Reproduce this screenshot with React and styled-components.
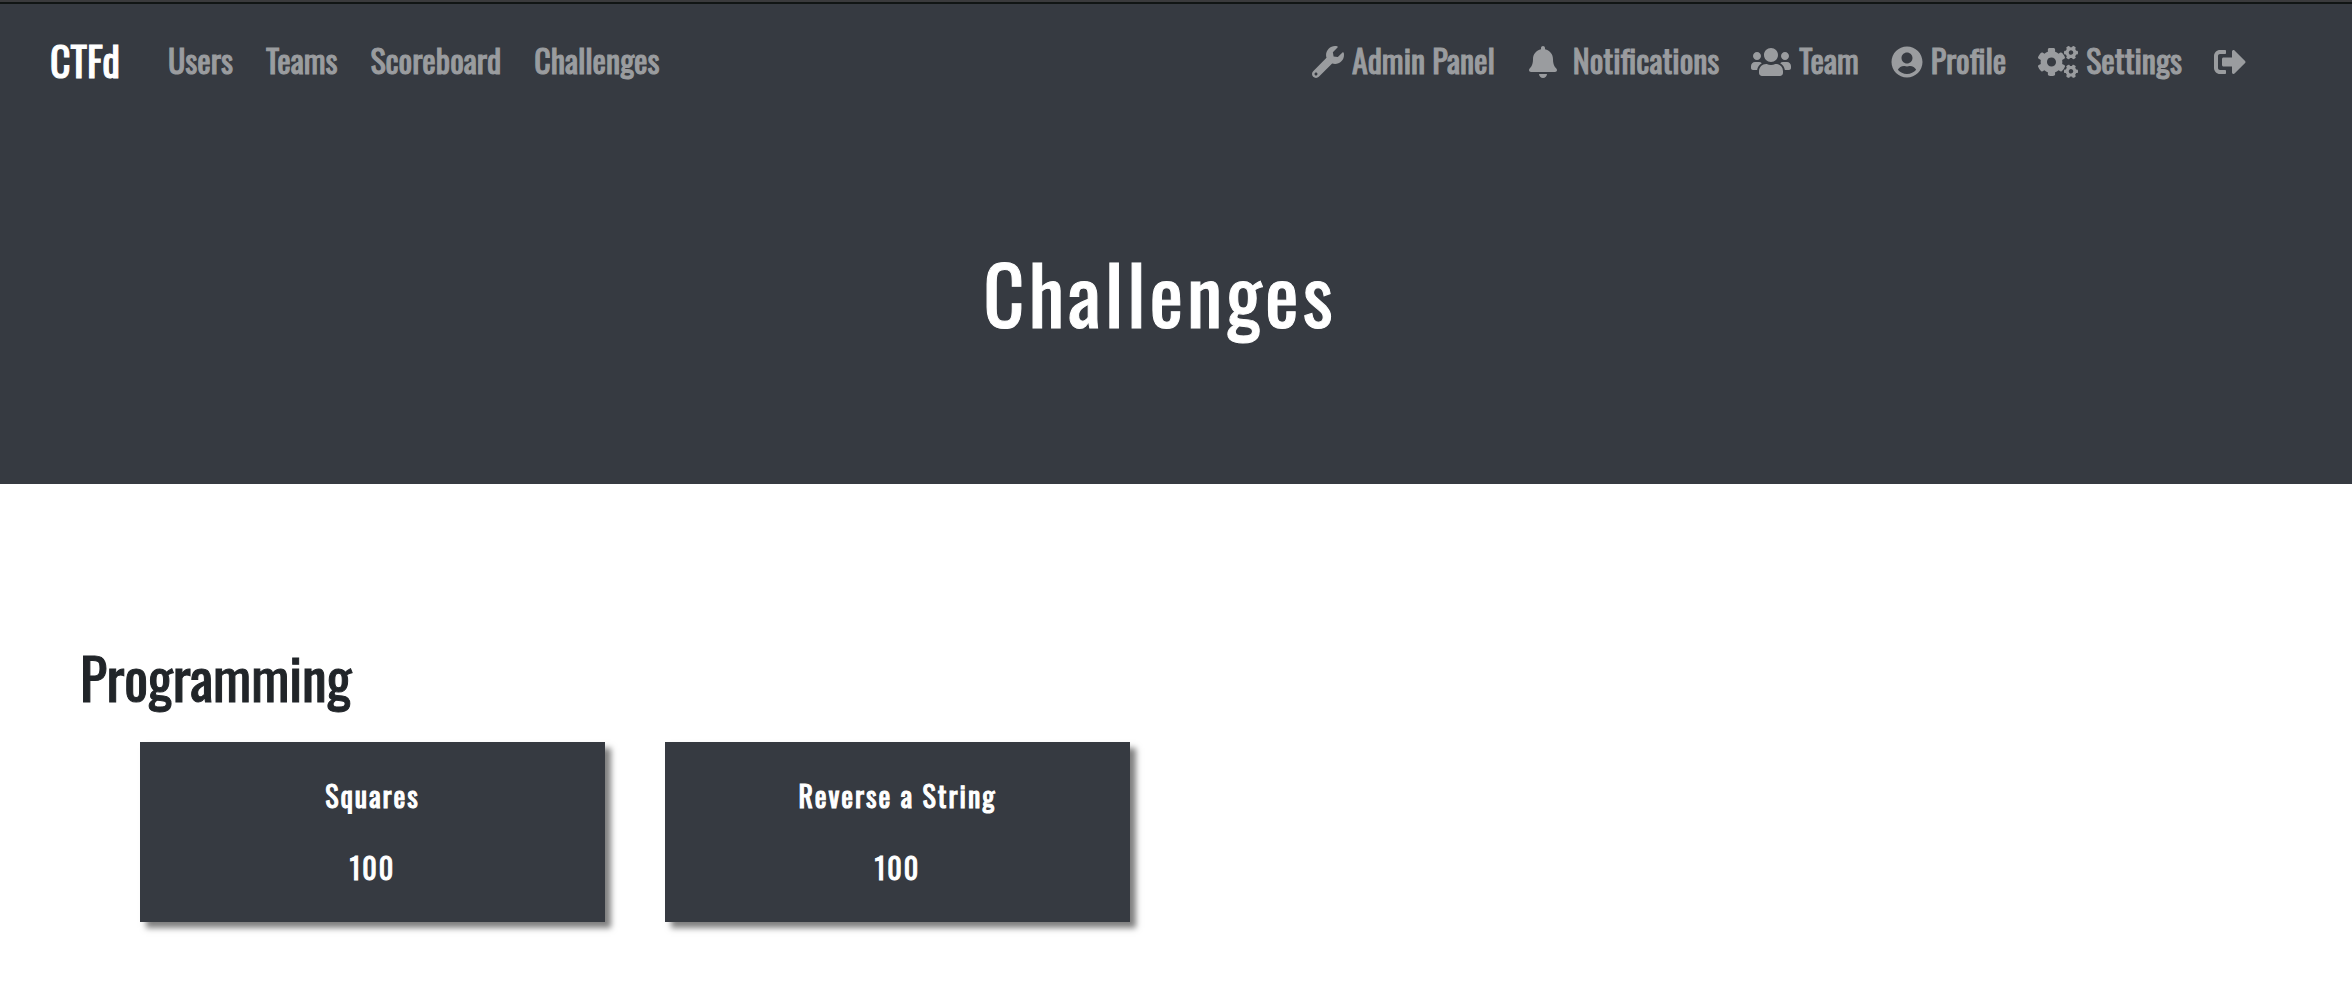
import React from "react";
import styled, { createGlobalStyle } from "styled-components";
import { FaWrench, FaBell, FaUsers, FaUserCircle, FaCogs, FaSignOutAlt } from "react-icons/fa";

const GlobalStyle = createGlobalStyle`
  *, *::before, *::after { box-sizing: border-box; }
  body {
    margin: 0;
    background: #fff;
    color: #212529;
    font-family: Oswald, "Liberation Sans Narrow", "Liberation Sans", sans-serif;
    font-size: 32px;
    font-weight: 400;
    line-height: 48px;
    -webkit-text-stroke: 1px currentColor;
  }
`;

const Header = styled.header`
  background: #363a41;
  color: #fff;
  border-top: 2px solid #3a3a3c;
`;

const Navbar = styled.nav`
  display: flex;
  align-items: center;
  padding: 24px 90px 24px 50px;
  border-top: 2px solid #111514;
`;

const Brand = styled.a`
  margin-right: 48px;
  font-size: 40px;
  line-height: 64px;
  color: #fff;
  text-decoration: none;
`;

const NavList = styled.ul`
  display: flex;
  gap: ${({ $end }) => ($end ? 32 : 33)}px;
  margin: 0;
  padding: 0;
  list-style: none;
  ${({ $end }) => $end && "margin-left: auto; padding-right: 16px;"}
`;

const NavLink = styled.a`
  display: flex;
  align-items: center;
  gap: ${({ $spaced }) => ($spaced ? 14 : 8)}px;
  height: 64px;
  color: #9a9c9f;
  text-decoration: none;
  white-space: nowrap;

  svg {
    flex: none;
    width: ${({ $wide }) => ($wide ? 40 : 32)}px;
    height: 32px;
    margin-top: 4px;
  }
`;

const Jumbotron = styled.div`
  padding: 124px 32px 140px 0;
  text-align: center;
`;

const Title = styled.h1`
  margin: 0;
  font-size: 80px;
  line-height: 104px;
  font-weight: inherit;
  letter-spacing: 4px;
`;

const Main = styled.main`
  padding: 160px 152px 60px 80px;
`;

const CategoryTitle = styled.h2`
  margin: 0 0 32px;
  font-size: 56px;
  line-height: 66px;
  font-weight: inherit;
`;

const Grid = styled.div`
  display: grid;
  grid-template-columns: repeat(4, minmax(0, 1fr));
  gap: 60px;
  padding: 0 20px 0 60px;
`;

const Card = styled.button`
  display: flex;
  flex-direction: column;
  align-items: center;
  gap: 24px;
  padding: 30px 16px;
  border: 0;
  background: #363a41;
  color: #fff;
  box-shadow: 6px 6px 6px rgba(0, 0, 0, 0.5);
  font: inherit;
  font-size: 28px;
  letter-spacing: 2px;
  cursor: pointer;
`;

const leftLinks = ["Users", "Teams", "Scoreboard", "Challenges"];
const rightLinks = [
  { label: "Admin Panel", icon: FaWrench },
  { label: "Notifications", icon: FaBell, spaced: true },
  { label: "Team", icon: FaUsers, wide: true },
  { label: "Profile", icon: FaUserCircle },
  { label: "Settings", icon: FaCogs, wide: true },
];
const challenges = [
  { name: "Squares", value: 100 },
  { name: "Reverse a String", value: 100 },
];

export default function App() {
  return (
    <>
      <GlobalStyle />
      <Header>
        <Navbar>
          <Brand href="#">CTFd</Brand>
          <NavList>
            {leftLinks.map((label) => (
              <li key={label}><NavLink href="#">{label}</NavLink></li>
            ))}
          </NavList>
          <NavList $end>
            {rightLinks.map(({ label, icon: Icon, wide, spaced }) => (
              <li key={label}>
                <NavLink href="#" $wide={wide} $spaced={spaced}>
                  <Icon aria-hidden="true" />
                  {label}
                </NavLink>
              </li>
            ))}
            <li>
              <NavLink href="#" aria-label="Logout"><FaSignOutAlt aria-hidden="true" /></NavLink>
            </li>
          </NavList>
        </Navbar>
        <Jumbotron><Title>Challenges</Title></Jumbotron>
      </Header>
      <Main>
        <CategoryTitle>Programming</CategoryTitle>
        <Grid>
          {challenges.map(({ name, value }) => (
            <Card key={name} type="button"><span>{name}</span><span>{value}</span></Card>
          ))}
        </Grid>
      </Main>
    </>
  );
}
